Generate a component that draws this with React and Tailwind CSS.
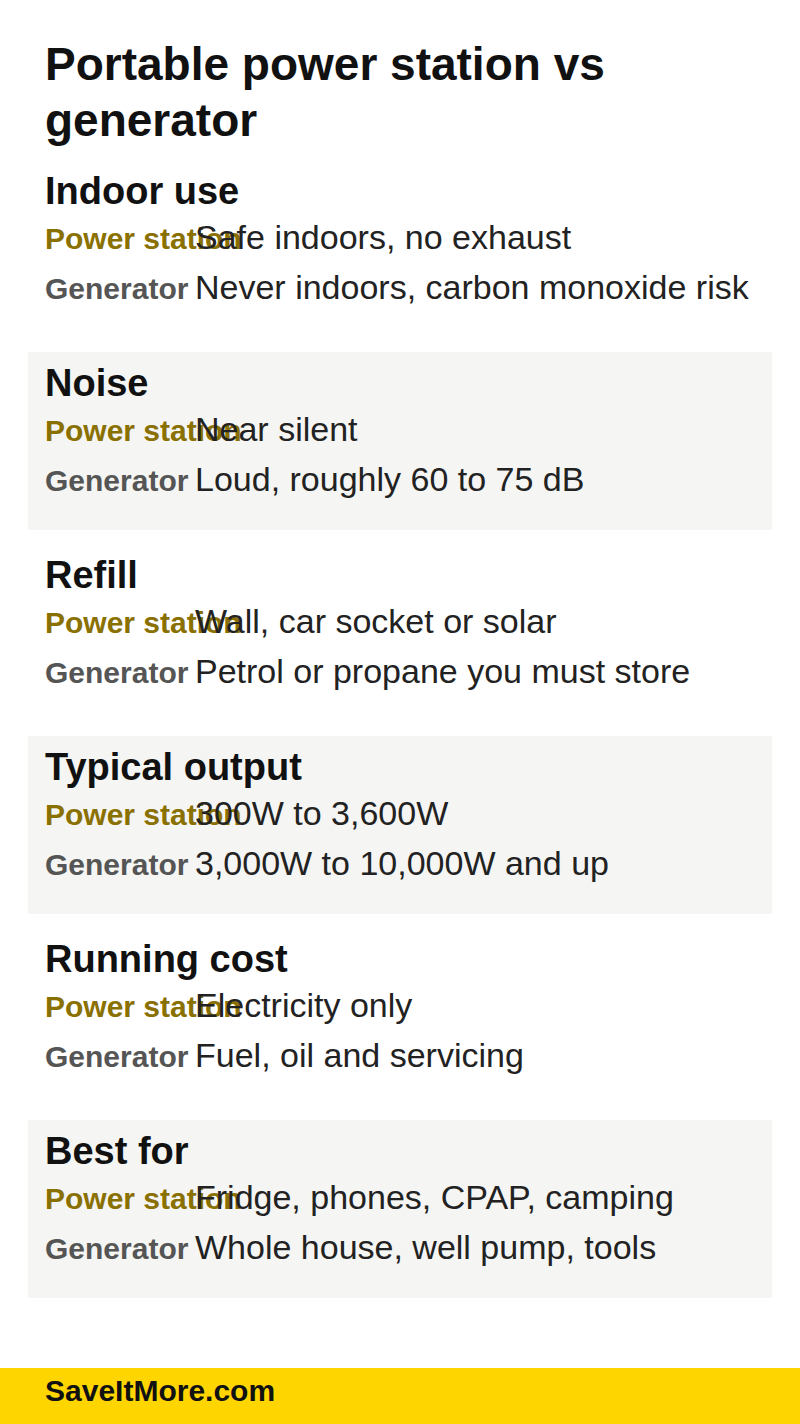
import React from 'react';

const rows = [
  { title: 'Indoor use', station: 'Safe indoors, no exhaust', generator: 'Never indoors, carbon monoxide risk' },
  { title: 'Noise', station: 'Near silent', generator: 'Loud, roughly 60 to 75 dB' },
  { title: 'Refill', station: 'Wall, car socket or solar', generator: 'Petrol or propane you must store' },
  { title: 'Typical output', station: '300W to 3,600W', generator: '3,000W to 10,000W and up' },
  { title: 'Running cost', station: 'Electricity only', generator: 'Fuel, oil and servicing' },
  { title: 'Best for', station: 'Fridge, phones, CPAP, camping', generator: 'Whole house, well pump, tools' },
];

const Line = ({ label, labelClass, value }) => (
  <div className="grid grid-cols-[150px_1fr] items-baseline">
    <span className={`text-[30px] leading-none font-bold whitespace-nowrap ${labelClass}`}>{label}</span>
    <span className="text-[34px] leading-[50px] text-[#222222] whitespace-nowrap">{value}</span>
  </div>
);

const App = () => {
  return (
    <div className="min-h-screen flex flex-col bg-white font-['Liberation_Sans',Arial,sans-serif]">
      <main className="flex-1 px-[28px] pt-[36px]">
        <h1 className="px-[17px] mb-[12px] text-[46px] leading-[56px] font-bold text-[#111111]">
          Portable power station vs generator
        </h1>
        <div className="flex flex-col gap-[14px]">
          {rows.map((r, i) => (
            <section
              key={r.title}
              className={`px-[17px] pt-[10px] pb-[26px] ${i % 2 === 1 ? 'bg-[#f5f5f3]' : ''}`}
            >
              <h2 className="text-[38px] leading-[42px] font-bold text-[#111111]">{r.title}</h2>
              <Line label="Power station" labelClass="text-[#8a7000]" value={r.station} />
              <Line label="Generator" labelClass="text-[#555555]" value={r.generator} />
            </section>
          ))}
        </div>
      </main>
      <footer className="h-[56px] bg-[#ffd500] px-[45px] pt-[5px]">
        <span className="text-[30px] leading-[36px] font-bold text-[#111111]">SaveItMore.com</span>
      </footer>
    </div>
  );
};

export default App;
